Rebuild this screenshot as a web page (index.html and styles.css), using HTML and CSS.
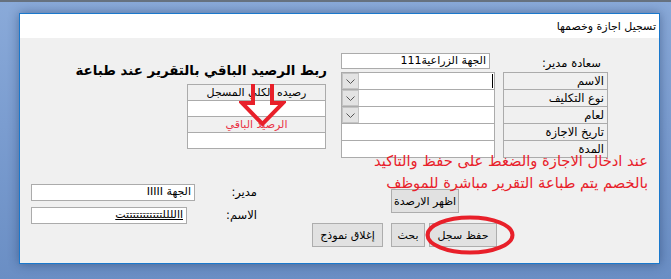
FILE: index.html
```html
<!DOCTYPE html>
<html lang="ar">
<head>
  <meta charset="UTF-8">
  <title>تسجيل اجازة وخصمها</title>
  <link rel="stylesheet" href="styles.css">
</head>
<body>
  <div class="window">
    <div class="titlebar"><span class="title">تسجيل اجازة وخصمها</span></div>

    <div class="client">
      <div class="top">
        <div class="left">
          <h2 class="heading">ربط الرصيد الباقي بالتقرير عند طباعة</h2>
          <div class="balance">
            <div class="cell label">رصيده الكلي المسجل</div>
            <div class="cell box"></div>
            <div class="cell label red">الرصيد الباقي</div>
            <div class="cell box"></div>
            <svg class="arrow" width="47" height="44" viewBox="0 0 47 44">
              <path d="M14 0 V19 H3 L23.5 40 L44 19 H33 V0" fill="none" stroke="#e8202a" stroke-width="4" stroke-linejoin="miter"/>
            </svg>
          </div>
        </div>

        <div class="right">
          <div class="mgr-row">
            <div class="textbox mgr">الجهة الزراعية111</div>
            <div class="mgr-label">سعادة مدير:</div>
          </div>
          <div class="fields">
            <div class="field-col">
              <div class="cell combo">
                <span class="drop"><svg width="9" height="5" viewBox="0 0 9 5"><path d="M0.5 0.5 L4.5 4.5 L8.5 0.5" fill="none" stroke="#555" stroke-width="1"/></svg></span>
                <span class="caret"></span>
              </div>
              <div class="cell combo">
                <span class="drop"><svg width="9" height="5" viewBox="0 0 9 5"><path d="M0.5 0.5 L4.5 4.5 L8.5 0.5" fill="none" stroke="#555" stroke-width="1"/></svg></span>
              </div>
              <div class="cell combo">
                <span class="drop"><svg width="9" height="5" viewBox="0 0 9 5"><path d="M0.5 0.5 L4.5 4.5 L8.5 0.5" fill="none" stroke="#555" stroke-width="1"/></svg></span>
              </div>
              <div class="cell box"></div>
              <div class="cell box"></div>
            </div>
            <div class="label-col">
              <div class="cell field-label">الاسم</div>
              <div class="cell field-label">نوع التكليف</div>
              <div class="cell field-label">لعام</div>
              <div class="cell field-label">تاريخ الاجازة</div>
              <div class="cell field-label">المدة</div>
            </div>
          </div>
        </div>
      </div>

      <div class="note">
        عند ادخال الاجازة والضغط على حفظ والتاكيد<br>
        بالخصم يتم طباعة التقرير مباشرة للموظف
      </div>

      <div class="bottom">
        <div class="bottom-left">
          <div class="line-row">
            <div class="textbox dept">الجهة IIIII</div>
            <div class="line-label">مدير:</div>
          </div>
          <div class="line-row second">
            <div class="textbox name">االلللتتتتتتتتتتتت</div>
            <div class="line-label">الاسم:</div>
          </div>
        </div>

        <div class="bottom-right">
          <button class="btn show-btn">اظهر الارصدة</button>
          <div class="btn-row">
            <button class="btn close-btn">إغلاق نموذج</button>
            <button class="btn search-btn">بحث</button>
            <span class="save-wrap">
              <button class="btn save-btn">حفظ سجل</button>
              <svg class="ring" width="90" height="40" viewBox="0 0 90 40">
                <ellipse cx="45" cy="20" rx="42.5" ry="17.5" fill="none" stroke="#e8202a" stroke-width="4"/>
              </svg>
            </span>
          </div>
        </div>
      </div>
    </div>
  </div>
</body>
</html>
```

FILE: styles.css
```css
* {
  box-sizing: border-box;
}

body {
  margin: 0;
  width: 671px;
  height: 279px;
  overflow: hidden;
  background: linear-gradient(180deg, #8aaad9 0%, #7b9dd0 45%, #6a8ec4 100%);
  border-top: 2px solid #66717f;
  font-family: "DejaVu Sans", sans-serif;
  font-size: 11px;
  color: #000;
}

.window {
  margin: 11px 0 0 19px;
  width: 641px;
  height: 251px;
  border: 1px solid #1a78cc;
  background-color: #f0f0f0;
  box-shadow: 0 0 10px rgba(20, 40, 80, 0.45);
}

.titlebar {
  height: 24px;
  background-color: #fff;
  display: flex;
  justify-content: flex-end;
  align-items: center;
  padding-right: 3px;
}

.title {
  direction: rtl;
  font-size: 11px;
  padding-top: 1px;
}

.client {
  position: relative;
  height: 225px;
}

.top {
  display: flex;
  padding-top: 15px;
}

.left {
  width: 307px;
}

.heading {
  margin: 9px 0 0;
  font-size: 13.4px;
  font-weight: bold;
  line-height: 18px;
  text-align: right;
  direction: rtl;
  white-space: nowrap;
}

.balance {
  position: relative;
  margin: 4px 0 0 167px;
  width: 139px;
}

.cell {
  height: 17px;
  border: 1px solid #ababab;
  margin-bottom: -1px;
  line-height: 15px;
}

.balance .cell {
  text-align: center;
  direction: rtl;
}

.label {
  background-color: #f0f0f0;
}

.box {
  background-color: #fff;
}

.red {
  color: #ea3346;
}

.arrow {
  position: absolute;
  left: 52px;
  top: 0;
}

.right {
  margin-left: 14px;
}

.mgr-row {
  display: flex;
  align-items: center;
  height: 16px;
}

.textbox {
  height: 100%;
  background-color: #fff;
  border: 1px solid #ababab;
  text-align: right;
  direction: rtl;
  padding-right: 3px;
  line-height: 14px;
  white-space: nowrap;
  overflow: hidden;
}

.mgr {
  width: 149px;
}

.mgr-label {
  width: 111px;
  text-align: right;
  direction: rtl;
  padding-top: 3px;
  font-size: 11.5px;
}

.fields {
  display: flex;
  gap: 8px;
  margin-top: 3px;
}

.field-col {
  width: 154px;
}

.label-col {
  width: 105px;
}

.field-col .cell {
  height: 18px;
}

.label-col .cell {
  height: 18px;
}

.combo {
  display: flex;
  align-items: stretch;
  background-color: #fff;
}

.drop {
  width: 17px;
  background-color: #e3e3e3;
  border: 1px solid #c4c4c4;
  display: flex;
  align-items: center;
  justify-content: center;
}

.caret {
  margin: 1px 1px 1px auto;
  width: 1px;
  background-color: #000;
}

.field-label {
  background-color: #f0f0f0;
  text-align: right;
  direction: rtl;
  padding-right: 3px;
  line-height: 16px;
  font-size: 11.5px;
}

.note {
  position: absolute;
  right: 11px;
  top: 112px;
  direction: rtl;
  text-align: right;
  color: #e8202a;
  font-size: 14.7px;
  line-height: 22px;
  white-space: nowrap;
}

.bottom {
  display: flex;
  align-items: flex-start;
  margin-top: 27px;
}

.bottom-left {
  margin-left: 11px;
  width: 226px;
}

.line-row {
  display: flex;
  height: 17px;
}

.line-row.second {
  margin-top: 6px;
}

.dept {
  width: 164px;
}

.name {
  width: 156px;
  text-decoration: underline;
}

.line-label {
  flex: 1;
  text-align: right;
  direction: rtl;
  font-size: 11.5px;
  line-height: 17px;
}

.bottom-right {
  margin: 5px 0 0 55px;
}

.btn {
  display: block;
  height: 24px;
  padding: 0;
  border: 1px solid #adadad;
  background-color: #e1e1e1;
  font-family: "DejaVu Sans", sans-serif;
  font-size: 11px;
  color: #000;
  direction: rtl;
}

.show-btn {
  margin-left: 79px;
  width: 68px;
}

.btn-row {
  display: flex;
  margin-top: 10px;
}

.close-btn {
  width: 71px;
  margin-right: 8px;
}

.search-btn {
  width: 34px;
  margin-right: 4px;
}

.save-wrap {
  position: relative;
}

.save-btn {
  width: 68px;
}

.ring {
  position: absolute;
  left: -4px;
  top: -8px;
}
```
